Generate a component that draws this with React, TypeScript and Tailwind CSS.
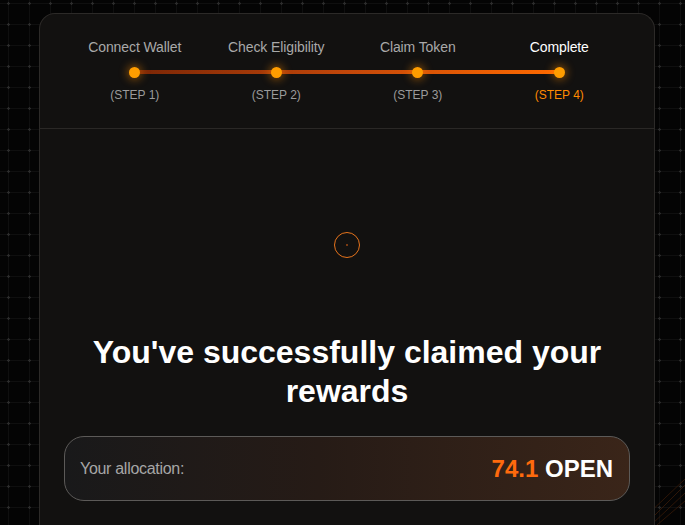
const steps = [
  { label: 'Connect Wallet', step: '(STEP 1)' },
  { label: 'Check Eligibility', step: '(STEP 2)' },
  { label: 'Claim Token', step: '(STEP 3)' },
  { label: 'Complete', step: '(STEP 4)' },
];

function Stepper() {
  return (
    <div className="relative grid grid-cols-4">
      {/* progress line between first and last dot */}
      <div className="absolute left-[71px] right-[71px] top-[31px] h-1 rounded-full bg-[linear-gradient(to_right,#7a2606,#c2470a_50%,#ff6a00)]" />
      {steps.map((s, i) => {
        const last = i === steps.length - 1;
        return (
          <div key={s.label} className="relative flex flex-col items-center">
            <span className={`text-[14px] leading-4 tracking-[-0.1px] ${last ? 'text-white' : 'text-[#a9a9a9]'}`}>
              {s.label}
            </span>
            <div className="mt-[7px] flex h-5 items-center justify-center">
              <span className="h-[11px] w-[11px] rounded-full bg-[#ff9d00] shadow-[0_0_8px_2px_rgba(255,140,0,0.45)]" />
            </div>
            <span className={`mt-[6px] text-[12px] leading-[14px] ${last ? 'text-[#ff8a00]' : 'text-[#9b9b9b]'}`}>
              {s.step}
            </span>
          </div>
        );
      })}
    </div>
  );
}

export default function App() {
  return (
    <div className="relative h-[525px] w-full overflow-hidden bg-[#040404] font-['Liberation_Sans',Arial,sans-serif]">
      <div className="absolute inset-0 bg-[radial-gradient(circle,#2c2c2c_1px,transparent_1.5px),linear-gradient(to_right,#0f0f0f_1px,transparent_1px),linear-gradient(to_bottom,#0f0f0f_1px,transparent_1px)] bg-[size:21px_21px] bg-[position:-2px_-7px,8px_3px,8px_3px]" />
      <svg className="absolute bottom-0 right-0" width="40" height="60" viewBox="0 0 40 60">
        <path d="M0 60 L40 20 M6 60 L40 28 M12 60 L40 36 M0 52 L40 14" stroke="#4a220a" strokeWidth="1" opacity="0.6" />
      </svg>
      <div className="relative pl-[39px] pt-[13px]">
        <div className="w-[616px] rounded-t-2xl border border-b-0 border-[#2c2a28] bg-[#121110]">
          <div className="border-b border-[#2a2826] px-6 pb-[26px] pt-[25px]">
            <Stepper />
          </div>
          <div className="flex flex-col items-center px-6 pt-[103px] pb-10">
            <div className="flex h-[26px] w-[26px] items-center justify-center rounded-full border border-[#e5731c]">
              <span className="h-[2px] w-[2px] bg-[#7a3a12]" />
            </div>
            <h1 className="mt-[75px] text-center text-[32px] font-bold leading-[39px] text-white">
              You've successfully claimed your rewards
            </h1>
            <div className="mt-[25px] flex h-[65px] w-full items-center justify-between rounded-[20px] border border-[#5c5a58] bg-[linear-gradient(to_right,#19191a,#261b16_45%,#3a2519)] pl-[15px] pr-[16px]">
              <span className="text-[16px] tracking-[-0.3px] text-[#a6a6a6]">Your allocation:</span>
              <span className="text-[24px] font-bold">
                <span className="text-[#ff6a0d]">74.1</span> <span className="text-white">OPEN</span>
              </span>
            </div>
          </div>
        </div>
      </div>
    </div>
  );
}
